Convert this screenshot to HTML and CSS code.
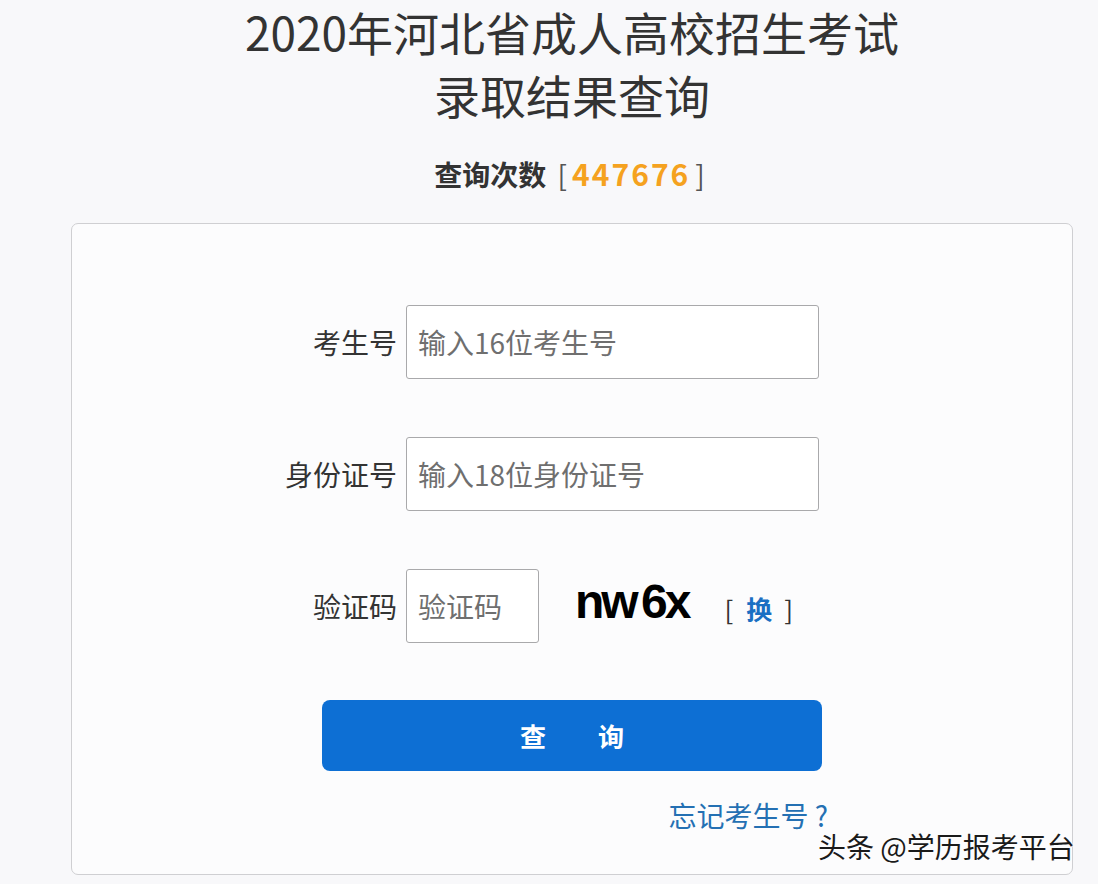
FILE: index.html
```
<!DOCTYPE html>
<html lang="zh-CN">
<head>
    <meta charset="UTF-8">
    <meta name="viewport" content="width=device-width, initial-scale=1.0">
    <title>2020年河北省成人高校招生考试录取结果查询</title>
    <link rel="stylesheet" href="styles.css">
</head>
<body>
    <div class="page">
        <h1 class="title">2020年河北省成人高校招生考试<br>录取结果查询</h1>

        <div class="counter">
            查询次数 <span class="bracket">[</span><span class="count">447676</span><span class="bracket">]</span>
        </div>

        <div class="card">
            <div class="form-row">
                <label class="form-label">考生号</label>
                <input class="form-input" type="text" placeholder="输入16位考生号">
            </div>

            <div class="form-row">
                <label class="form-label">身份证号</label>
                <input class="form-input" type="text" placeholder="输入18位身份证号">
            </div>

            <div class="form-row">
                <label class="form-label">验证码</label>
                <input class="form-input small" type="text" placeholder="验证码">
                <span class="captcha">nw 6x</span>
                <span class="refresh"><span class="bracket">[</span><a href="#">换</a><span class="bracket">]</span></span>
            </div>

            <button class="submit-button" type="button">查　　询</button>

            <div class="forget-row">
                <a href="#" class="forget-link">忘记考生号 ?</a>
            </div>
        </div>

        <div class="watermark">头条 @学历报考平台</div>
    </div>
</body>
</html>
```

FILE: styles.css
```
* {
    margin: 0;
    padding: 0;
    box-sizing: border-box;
}

body {
    font-family: "Noto Sans CJK SC", "Noto Sans", sans-serif;
    background: #f8f8fa;
    color: #333;
    overflow: hidden;
}

.page {
    width: 1002px;
    margin-left: 71px;
    position: relative;
    height: 884px;
}

/* Заголовок */
.title {
    font-size: 46px;
    font-weight: 400;
    line-height: 63px;
    text-align: center;
    color: #333;
}

.counter {
    margin-top: 30px;
    font-size: 28px;
    font-weight: 700;
    line-height: 34px;
    text-align: center;
    color: #333;
}

.counter .bracket {
    font-weight: 400;
    color: #555;
    margin: 0 5px;
}

.counter .count {
    font-size: 30px;
    color: #f5a21f;
    letter-spacing: 2px;
}

/* Форма */
.card {
    margin-top: 32px;
    height: 652px;
    background: #fcfcfd;
    border: 1px solid #cfcfd2;
    border-radius: 7px;
    padding-top: 81px;
}

.form-row {
    display: flex;
    align-items: center;
    height: 74px;
    margin-bottom: 58px;
}

.form-label {
    width: 334px;
    padding-right: 9px;
    text-align: right;
    font-size: 28px;
    color: #333;
}

.form-input {
    width: 413px;
    height: 74px;
    border: 1px solid #a9a9ab;
    border-radius: 3px;
    background: #fff;
    padding-left: 11px;
    font-family: inherit;
    font-size: 28px;
    color: #333;
    outline: none;
}

.form-input::placeholder {
    color: #6f6f6f;
}

.form-input.small {
    width: 133px;
}

.captcha {
    margin-left: 36px;
    font-family: "Liberation Sans", Arial, sans-serif;
    font-weight: 700;
    font-size: 48px;
    letter-spacing: -3px;
    word-spacing: -5px;
    color: #000;
    margin-top: -10px;
}

.refresh {
    margin-left: 36px;
    font-size: 26px;
    font-weight: 700;
    color: #333;
    margin-top: 4px;
}

.refresh .bracket {
    font-weight: 400;
}

.refresh a {
    margin: 0 12px 0 13px;
    color: #1a6fc3;
    text-decoration: none;
}

.submit-button {
    display: block;
    margin-left: 250px;
    margin-top: -1px;
    width: 500px;
    height: 71px;
    border: none;
    border-radius: 8px;
    background: #0d6fd4;
    color: #fff;
    font-family: inherit;
    font-size: 26px;
    font-weight: 700;
    cursor: pointer;
}

.forget-row {
    width: 756px;
    text-align: right;
    margin-top: 24px;
}

.forget-link {
    font-size: 28px;
    color: #2470b3;
    text-decoration: none;
}

/* Водяний знак */
.watermark {
    position: absolute;
    left: 747px;
    top: 826px;
    font-size: 28px;
    white-space: nowrap;
    color: #1a1a1a;
    text-shadow: 0 0 2px #fff, 0 0 2px #fff;
}
```
